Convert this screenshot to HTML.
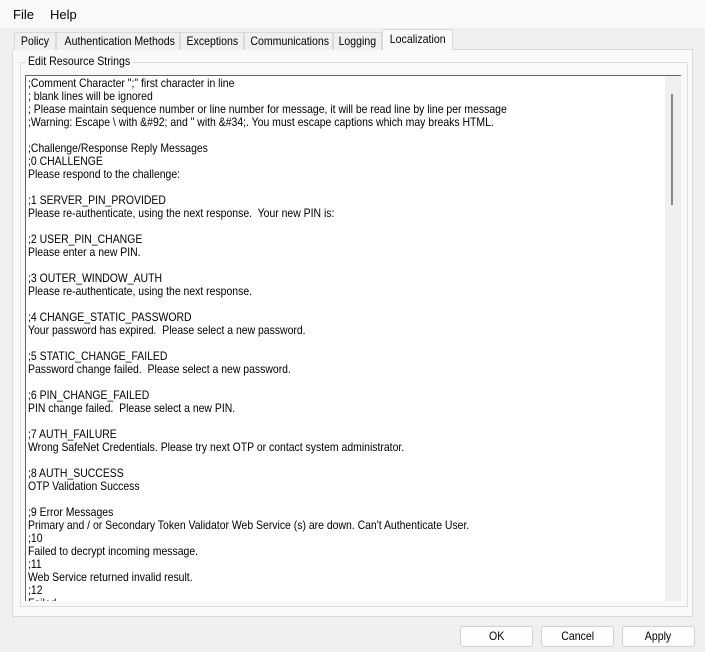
<!DOCTYPE html>
<html><head><style>
*{box-sizing:border-box;margin:0;padding:0}
body{width:705px;height:652px;background:#f0f0f0;font-family:"Liberation Sans",sans-serif;font-size:12px;color:#000;position:relative;overflow:hidden}
.s{display:inline-block;transform:scaleX(0.88);transform-origin:center;white-space:nowrap}
.menu{position:absolute;left:0;top:0;width:705px;height:28px;background:#f9f9f9}
.menu span{position:absolute;top:7px;font-size:13px}
.tab{position:absolute;top:32px;height:18px;border:1px solid #d9d9d9;border-bottom:none;background:#f0f0f0;font-size:12px;text-align:center;line-height:16px;white-space:nowrap;overflow:visible}
.tab.sel{top:29px;height:21px;background:#f9f9f9;z-index:2;line-height:18px}
.page{position:absolute;left:12px;top:49px;width:681px;height:568px;background:#f9f9f9;border:1px solid #d9d9d9}
.grp{position:absolute;left:20px;top:62px;width:668px;height:545px;border:1px solid #dcdcdc}
.grpl{position:absolute;left:26px;top:54px;width:107px;overflow:hidden;background:#f9f9f9;padding:0 2px;font-size:12px;white-space:nowrap}
.tb{position:absolute;left:25px;top:75px;width:656px;height:526px;background:#fff;border-top:1px solid #646464;border-left:1px solid #646464;overflow:hidden}
.sb{position:absolute;right:0;top:0;width:16px;height:100%;background:#f0f0f0}
.th{position:absolute;left:6px;top:18px;width:2px;height:111px;background:#888}
pre{position:absolute;left:2px;top:1px;font-family:"Liberation Sans",sans-serif;font-size:12px;line-height:13px;white-space:pre;transform:scaleX(0.87);transform-origin:0 0}
.btn{position:absolute;top:626px;width:73px;height:21px;border:1px solid #d0d0d0;border-radius:3px;background:#fdfdfd;text-align:center;line-height:19px;font-size:12px}
</style></head><body>
<div class="menu"><span style="left:13px">File</span><span style="left:50px">Help</span></div>
<div class="page"></div>
<div class="tab" style="left:14px;width:42px"><span class="s">Policy</span></div>
<div class="tab" style="left:56px;width:124px"><span class="s">Authentication Methods</span></div>
<div class="tab" style="left:180px;width:64px"><span class="s">Exceptions</span></div>
<div class="tab" style="left:244px;width:89px"><span class="s">Communications</span></div>
<div class="tab" style="left:333px;width:49px"><span class="s">Logging</span></div>
<div class="tab sel" style="left:382px;width:71px"><span class="s">Localization</span></div>
<div class="grp"></div>
<div class="grpl"><span class="s" style="transform-origin:0 0">Edit Resource Strings</span></div>
<div class="tb"><pre>;Comment Character ";" first character in line
; blank lines will be ignored
; Please maintain sequence number or line number for message, it will be read line by line per message
;Warning: Escape \ with &amp;#92; and " with &amp;#34;. You must escape captions which may breaks HTML.

;Challenge/Response Reply Messages
;0 CHALLENGE
Please respond to the challenge:

;1 SERVER_PIN_PROVIDED
Please re-authenticate, using the next response.  Your new PIN is:

;2 USER_PIN_CHANGE
Please enter a new PIN.

;3 OUTER_WINDOW_AUTH
Please re-authenticate, using the next response.

;4 CHANGE_STATIC_PASSWORD
Your password has expired.  Please select a new password.

;5 STATIC_CHANGE_FAILED
Password change failed.  Please select a new password.

;6 PIN_CHANGE_FAILED
PIN change failed.  Please select a new PIN.

;7 AUTH_FAILURE
Wrong SafeNet Credentials. Please try next OTP or contact system administrator.

;8 AUTH_SUCCESS
OTP Validation Success

;9 Error Messages
Primary and / or Secondary Token Validator Web Service (s) are down. Can't Authenticate User.
;10
Failed to decrypt incoming message.
;11
Web Service returned invalid result.
;12
Failed</pre><div class="sb"><div class="th"></div></div></div>
<div class="btn" style="left:460px"><span class="s">OK</span></div>
<div class="btn" style="left:541px"><span class="s">Cancel</span></div>
<div class="btn" style="left:622px"><span class="s">Apply</span></div>
</body></html>
